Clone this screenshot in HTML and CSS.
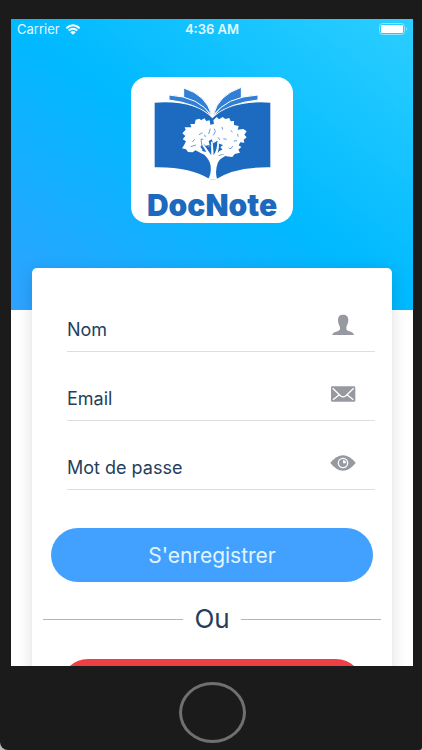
FILE: index.html
```html
<!DOCTYPE html>
<html lang="fr">
<head>
<meta charset="utf-8">
<meta name="viewport" content="width=device-width, initial-scale=1">
<title>DocNote</title>
<link rel="stylesheet" href="styles.css">
</head>
<body>
<div class="device">
  <main class="screen">
    <header class="hero">
      <div class="status">
        <div class="carrier">
          <span>Carrier</span>
          <svg class="wifi" viewBox="0 0 48 32" aria-hidden="true"><path d="M4 12Q24-5 44 12" /><path d="M11 19Q24 8 37 19" /><path class="solid" d="M16 24Q24 17 32 24L24 32Z" /></svg>
        </div>
        <span class="time">4:36 AM</span>
        <svg class="battery" viewBox="0 0 28 12" aria-hidden="true"><rect class="shell" x=".5" y=".5" width="25" height="11" rx="3"/><rect class="charge" x="2" y="2" width="22" height="8" rx="1"/><path class="shell-tip" d="M27 4q2 2 0 4z"/></svg>
      </div>
      <div class="logo">
        <svg class="book" viewBox="0 0 375 330" aria-hidden="true">
          <g class="leaf">
            <path d="M101 24Q169 45 185 105Q151 68 101 57Z"/>
            <path d="M274 22Q205 45 190 105Q223 68 274 57Z"/>
            <path d="M57 45Q150 51 184 108Q135 69 57 60Z"/>
            <path d="M324 45Q225 51 191 108Q240 69 324 60Z"/>
          </g>
          <path class="cover" d="M14 68Q135 60 187 115Q240 60 361 68V262Q255 260 198 298H180Q120 260 14 262Z"/>
          <g class="tree">
            <path d="M172 302Q185 282 182 258Q180 240 163 224Q142 217 134 205L138 202Q155 214 169 216L151 186L155 184L184 226L183 185H188L191 226Q202 210 202 184L207 185Q208 203 203 218Q222 207 232 191L236 194Q222 218 203 229L235 219L234 224Q207 235 203 250Q194 274 202 301Q187 292 172 302Z"/>
            <path d="M102 196L108 184L98 178L106 168L97 160L107 149L104 142L124 142L121 132L134 132L137 119L149 116L153 121L163 115L169 123L179 121L181 134L192 132L190 121L200 111L207 118L218 111L226 117L238 114L242 124L252 123L252 135L266 138L263 149L280 147L290 154L283 164L290 172L281 179L283 188L271 187L266 196L274 201L265 209L270 218L254 222L247 231L229 229L222 223L204 224L207 214L218 209L211 202L219 195L208 191L202 182L190 190L185 178L176 183L179 195L167 197L160 191L151 200L158 210L151 217L136 211L128 217L114 216L108 208L96 205Z"/>
          </g>
          <g class="gaps">
            <path d="M147 164L158 158M160 178L153 177L156 200M181 146L176 162M193 146L196 155L190 166M216 141L218 149M243 151L247 157M262 162L265 170M134 178L127 186M122 200L138 195M220 176L230 178M236 204L243 206L248 198M204 172L210 180M184 196L174 200M251 183L261 182M164 164L166 171"/>
          </g>
        </svg>
        <h1>DocNote</h1>
      </div>
    </header>
    <form class="card">
      <div class="fields">
        <div class="field">
          <label for="nom">Nom</label><input id="nom" type="text">
          <svg viewBox="0 0 78 90" aria-hidden="true"><path d="M39 14C49 14 55 19 55 30C55 41 49 47 49 52V57C49 65 71 63 72 75H7C7 64 29 66 30 57V52C29 47 24 41 24 30C24 19 29 14 39 14Z"/></svg>
        </div>
        <div class="field">
          <label for="email">Email</label><input id="email" type="email">
          <svg viewBox="0 0 78 90" aria-hidden="true"><rect x="3" y="22" width="73" height="46" rx="4"/><path class="cut" d="M8 28L32 51Q39 56 47 51L71 28M9 62L28 47M70 62L51 47"/></svg>
        </div>
        <div class="field">
          <label for="pass">Mot de passe</label><input id="pass" type="password">
          <svg viewBox="0 0 78 90" aria-hidden="true"><path d="M1 45Q19 22 39 22T77 45Q59 68 39 68T1 45Z"/><circle class="cut" cx="39" cy="45" r="14"/><path class="glint" d="M39 36V46H48A9 9 0 0 0 39 36Z"/></svg>
        </div>
      </div>
      <button class="submit" type="submit">S'enregistrer</button>
      <div class="or"><span>Ou</span></div>
      <button class="google" type="button" aria-label="Google"></button>
    </form>
  </main>
  <footer class="chin"><button class="home" type="button" aria-label="Home"></button></footer>
</div>
</body>
</html>
```
FILE: styles.css
```css
* { box-sizing: border-box; }

body {
  margin: 0;
  background: #bbb;
  font-family: Inter, "Open Sans", sans-serif;
  color: #243f5c;
}

button { border: 0; padding: 0; font: inherit; }

.device {
  display: flex;
  flex-direction: column;
  height: 100vh;
  padding: 19px 9px 0 11px;
  background: #1b1b1b;
  border-radius: 0 0 3px 8px;
}

.screen {
  flex: 1;
  min-height: 0;
  overflow: hidden;
  background: #fff;
}

.hero {
  padding-bottom: 87px;
  background: linear-gradient(to top right, #2fa2ff, #00b9ff 50%, #2bceff);
}

.status {
  display: grid;
  grid-template-columns: 1fr auto 1fr;
  align-items: center;
  height: 20px;
  padding: 0 6px;
  font-size: 13px;
  color: #e2f8ff;
}

.carrier { display: flex; align-items: center; gap: 5px; }
.time { font-weight: 600; }

.wifi { width: 16px; height: 11px; fill: none; stroke: #fff; stroke-width: 6; }
.wifi .solid { fill: #fff; stroke: none; }

.battery { width: 28px; height: 12px; justify-self: end; fill: #fff; }
.battery .shell { fill: none; stroke: #8ce5ff; }
.battery .shell-tip { fill: #8ce5ff; }

.logo {
  display: flex;
  flex-direction: column;
  align-items: center;
  width: 162px;
  height: 146px;
  margin: 38px auto 0;
  padding-top: 3px;
  background: #fff;
  border-radius: 16px;
}

.logo h1 {
  margin: 0;
  font-size: 30px;
  line-height: 30px;
  font-weight: 900;
  color: #1d69bd;
}

.book { width: 125px; height: 110px; }
.leaf { fill: #3180d5; stroke: #fff; stroke-width: 3; }
.cover { fill: #1d6bc0; }
.tree { fill: #fff; }
.gaps { fill: none; stroke: #6c9dd5; stroke-width: 3; stroke-linejoin: round; }

.card {
  display: flex;
  flex-direction: column;
  margin: -42px 21px 0;
  padding: 16px 11px 40px;
  background: #fff;
  border-radius: 5px;
  box-shadow: 0 3px 16px rgba(0, 0, 0, 0.14);
}

.fields { padding: 0 6px 0 24px; }

.field {
  display: flex;
  align-items: flex-end;
  height: 68px;
  padding: 0 19px 11px 0;
  border-bottom: 1px solid #dedede;
  font-size: 18px;
  line-height: 20px;
}

.field + .field { height: 69px; }

.field input {
  flex: 1;
  min-width: 0;
  height: 20px;
  padding: 0 8px;
  border: 0;
  outline: 0;
  background: none;
  font: inherit;
  color: inherit;
}

.field svg { width: 26px; height: 30px; fill: #9799a1; }
.field .cut { fill: none; stroke: #fff; stroke-width: 4; }
.field .glint { fill: #fff; }

.submit {
  height: 54px;
  margin: 38px 8px 0;
  border-radius: 27px;
  background: #42a1ff;
  font-size: 21px;
  color: #e0f5ff;
}

.or {
  display: flex;
  align-items: center;
  gap: 11px;
  margin-top: 21px;
  font-size: 26px;
  line-height: 32px;
}

.or::before,
.or::after {
  content: "";
  flex: 1;
  height: 1px;
  background: #b5b5b5;
}

.google {
  height: 54px;
  margin: 24px 18px 0;
  border-radius: 27px;
  background: #ee4044;
}

.chin {
  display: flex;
  justify-content: center;
  height: 84px;
  padding-top: 16px;
}

.home {
  width: 67px;
  height: 61px;
  border: 3px solid #707070;
  border-radius: 50%;
  background: none;
}
```
